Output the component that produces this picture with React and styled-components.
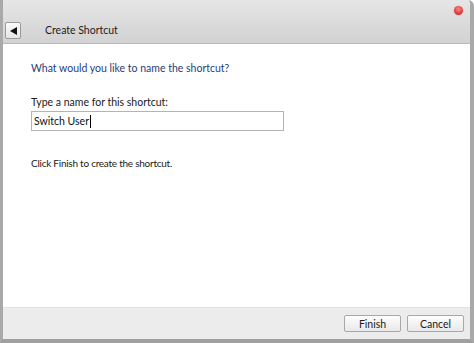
import React from "react";
import styled, { createGlobalStyle } from "styled-components";

const Global = createGlobalStyle`
  html, body { margin: 0; padding: 0; background: #ffffff; }
  body { font-family: Lato, "Noto Sans", sans-serif; }
  #root { width: 474px; height: 343px; }
`;

const Window = styled.div`
  box-sizing: border-box;
  width: 474px;
  height: 343px;
  display: flex;
  flex-direction: column;
  border-left: 3px solid #a9a9a9;
  border-right: 4px solid #a9a9a9;
  border-bottom: 4px solid #a0a0a0;
  border-top-right-radius: 6px;
  background: #ffffff;
  overflow: hidden;
`;

const Header = styled.div`
  position: relative;
  height: 44px;
  flex: none;
  display: flex;
  align-items: flex-end;
  padding: 0 0 4px 2px;
  box-sizing: border-box;
  gap: 24px;
  background: linear-gradient(#e6e6e6, #d2d2d2);
  border-bottom: 1px solid #b9b9b9;
`;

const BackButton = styled.div`
  width: 16px;
  height: 17px;
  box-sizing: border-box;
  border: 1px solid #9a9a9a;
  border-radius: 2px;
  background: linear-gradient(#fbfbfb, #e4e4e4);
  display: flex;
  align-items: center;
  justify-content: center;
`;

const Title = styled.div`
  font-size: 10.5px;
  color: #1c1c1c;
  line-height: 17px;
`;

const CloseDot = styled.div`
  position: absolute;
  right: 7px;
  top: 6px;
  width: 9px;
  height: 9px;
  border-radius: 50%;
  background: radial-gradient(circle at 50% 35%, #ff8a8a, #e23a3a 60%, #b82020);
  box-shadow: 0 0 1px rgba(0,0,0,0.3);
`;

const Content = styled.div`
  flex: 1;
  padding: 16px 0 0 28px;
  display: flex;
  flex-direction: column;
`;

const Heading = styled.div`
  font-size: 10.5px;
  color: #1f3d78;
  line-height: 16px;
  margin-bottom: 19px;
`;

const Label = styled.div`
  font-size: 10.5px;
  color: #1a1a1a;
  line-height: 15px;
  margin-bottom: 1px;
`;

const Input = styled.div`
  box-sizing: border-box;
  width: 253px;
  height: 20px;
  border: 1px solid #b4b4b4;
  background: #fff;
  font-size: 10.5px;
  padding-left: 2px;
  color: #111;
  display: flex;
  align-items: center;
`;

const Caret = styled.span`
  display: inline-block;
  width: 1px;
  height: 13px;
  background: #000;
  margin-left: 1px;
`;

const Note = styled.div`
  font-size: 10px;
  letter-spacing: -0.25px;
  color: #1a1a1a;
  line-height: 15px;
  margin-top: 25px;
`;

const Footer = styled.div`
  height: 31px;
  flex: none;
  background: #ececec;
  border-top: 1px solid #e2e2e2;
  display: flex;
  justify-content: flex-end;
  align-items: center;
  gap: 6px;
  padding-right: 6px;
`;

const Button = styled.div`
  box-sizing: border-box;
  width: 57px;
  height: 17px;
  border: 1px solid #a8a8a8;
  border-radius: 2px;
  background: linear-gradient(#fdfdfd, #e9e9e9);
  font-size: 10.5px;
  color: #1a1a1a;
  display: flex;
  align-items: center;
  justify-content: center;
`;

export default function App() {
  return (
    <>
      <Global />
      <Window>
        <Header>
          <BackButton>
            <svg width="7" height="8" viewBox="0 0 7 8">
              <path d="M0 4 L7 0 L7 8 Z" fill="#111" />
            </svg>
          </BackButton>
          <Title>Create Shortcut</Title>
          <CloseDot />
        </Header>
        <Content>
          <Heading>What would you like to name the shortcut?</Heading>
          <Label>Type a name for this shortcut:</Label>
          <Input>
            Switch User<Caret />
          </Input>
          <Note>Click Finish to create the shortcut.</Note>
        </Content>
        <Footer>
          <Button>Finish</Button>
          <Button>Cancel</Button>
        </Footer>
      </Window>
    </>
  );
}
